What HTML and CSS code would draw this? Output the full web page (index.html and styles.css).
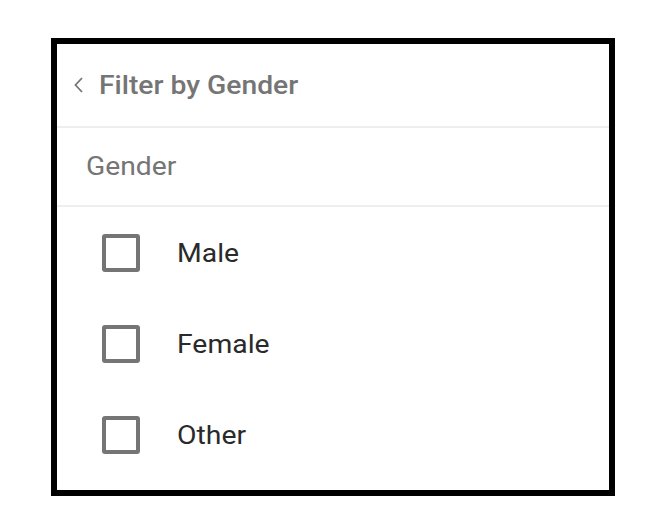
FILE: index.html
```html
<!DOCTYPE html>
<html>
<head>
<meta charset="utf-8">
<link rel="stylesheet" href="styles.css">
</head>
<body>
<div class="frame">
  <div class="header">
    <svg class="chev" width="13" height="20" viewBox="0 0 13 20"><path d="M10 3 L3.5 10 L10 17" fill="none" stroke="#757575" stroke-width="1.8"/></svg>
    <span class="title">Filter by Gender</span>
  </div>
  <div class="section"><span class="section-text">Gender</span></div>
  <div class="list">
    <label class="item"><span class="box"></span><span class="label">Male</span></label>
    <label class="item"><span class="box"></span><span class="label">Female</span></label>
    <label class="item"><span class="box"></span><span class="label">Other</span></label>
  </div>
</div>
</body>
</html>
```
FILE: styles.css
```css
html, body { margin: 0; padding: 0; background: #fff; }
body { font-family: Roboto, "Liberation Sans", sans-serif; }
.frame {
  margin: 38px 0 0 51px;
  width: 552px;
  height: 446px;
  border: 6px solid #000;
  background: #fff;
}
.header {
  height: 82px;
  display: flex;
  align-items: center;
  padding-left: 15px;
  gap: 14px;
  border-bottom: 2px solid #eeeeee;
}
.title {
  display: inline-block;
  font-size: 25px;
  font-weight: 500;
  color: #757575;
  transform: scaleX(1.13);
  transform-origin: left center;
}
.section {
  height: 77px;
  display: flex;
  align-items: center;
  padding-left: 29px;
  border-bottom: 2px solid #eeeeee;
}
.section-text {
  display: inline-block;
  font-size: 25px;
  color: #757575;
  transform: scaleX(1.13);
  transform-origin: left center;
}
.list { display: flex; flex-direction: column; }
.item {
  height: 91px;
  display: flex;
  align-items: center;
  padding-left: 45px;
}
.box {
  width: 30px;
  height: 30px;
  border: 4px solid #757575;
  border-radius: 3px;
  margin-right: 37px;
}
.label {
  display: inline-block;
  font-size: 26px;
  color: #2a2a2a;
  transform: scaleX(1.09);
  transform-origin: left center;
}
```
